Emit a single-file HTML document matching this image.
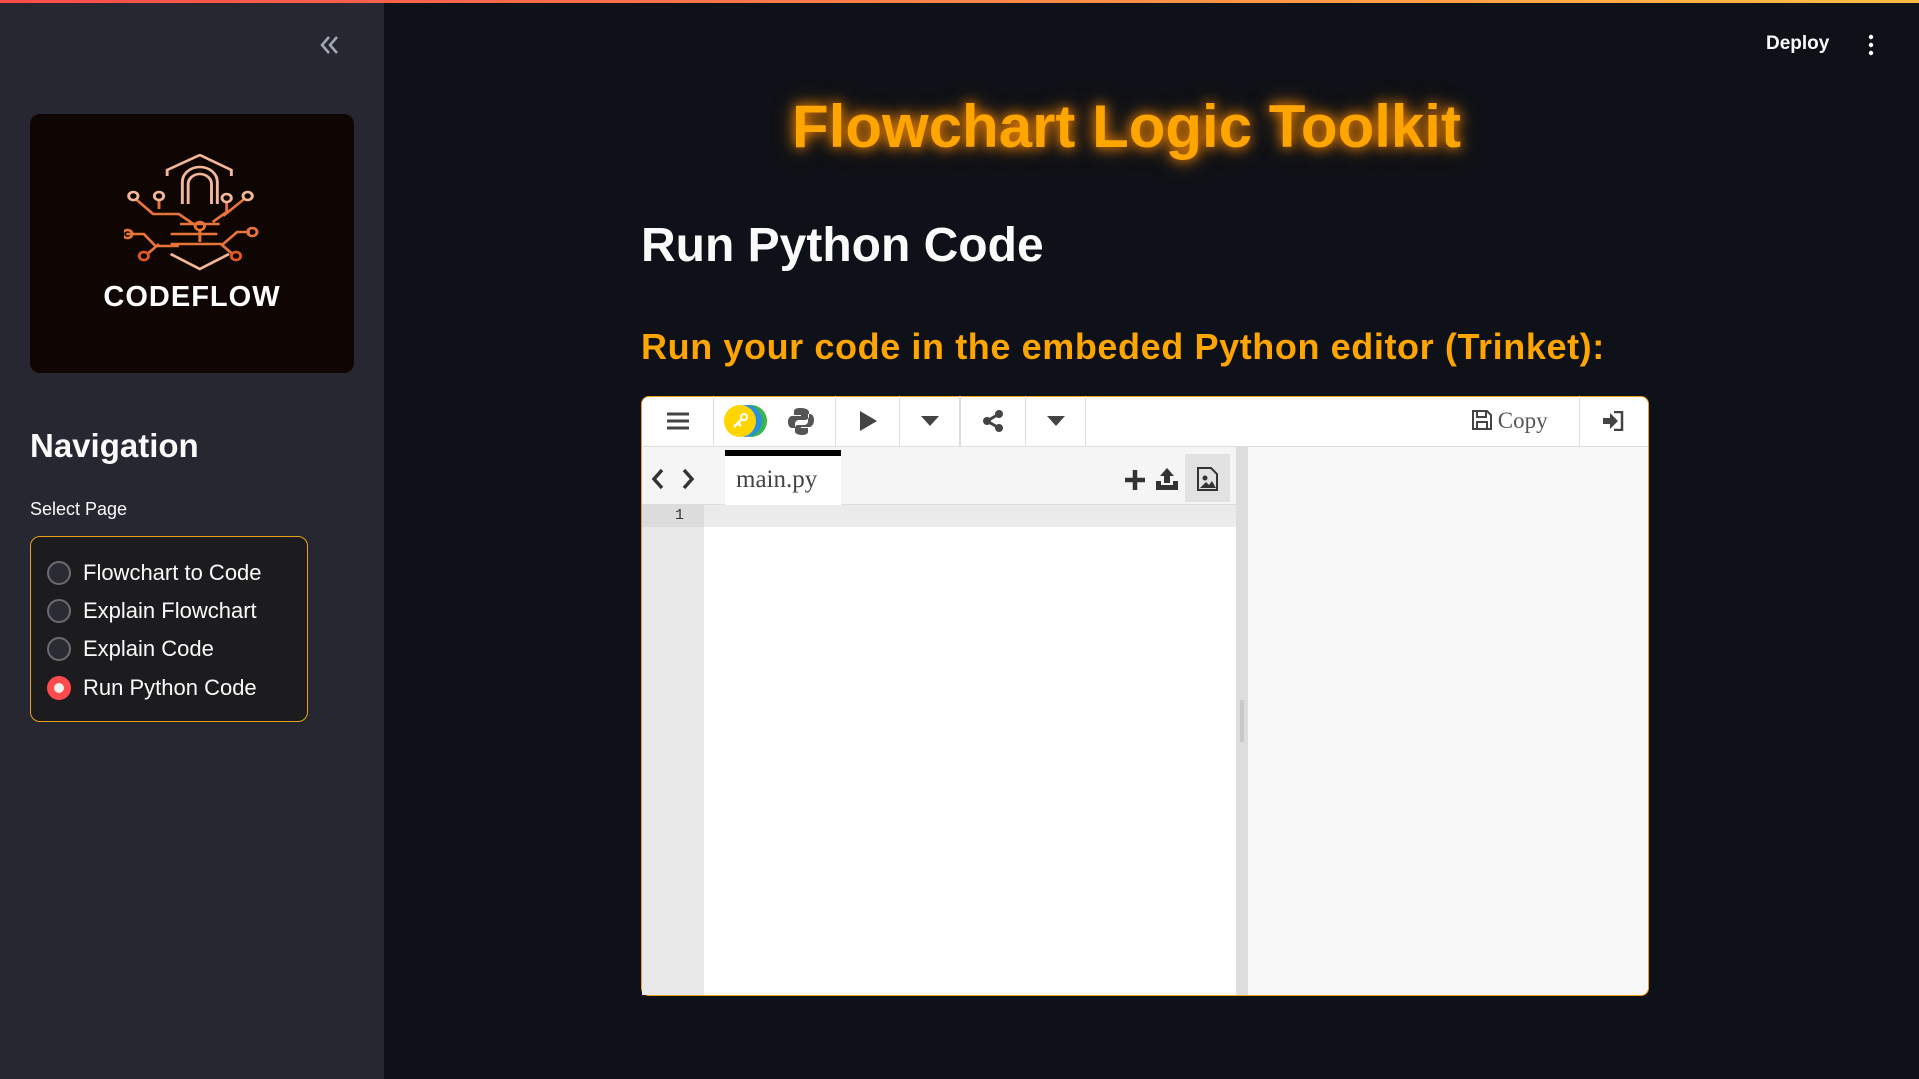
<!DOCTYPE html>
<html><head><meta charset="utf-8"><style>
*{box-sizing:border-box;margin:0;padding:0}
body{width:1919px;height:1079px;overflow:hidden;background:#0e1117;font-family:"Liberation Sans",sans-serif;position:relative;color:#fafafa}
.abs{position:absolute}
#top{left:0;top:0;width:1919px;height:3px;background:linear-gradient(90deg,#ff4b4b,#ffbd45)}
#side{left:0;top:0;width:384px;height:1079px;background:#262730}
.logo{left:30px;top:114px;width:324px;height:259px;background:#0f0603;border-radius:10px}
.radio{left:30px;top:536px;width:278px;height:186px;border:1px solid #e8a019;border-radius:10px;background:#1c1c1f}
.ri{position:absolute;left:16px;font-size:22px;color:#fafafa;height:30px;line-height:30px}
.ri i{position:absolute;left:0;top:3px;width:24px;height:24px;border-radius:50%;border:2px solid #6b6b70;background:#2b2b33}
.ri span{position:absolute;left:36px;white-space:nowrap}
.tb{top:396px;height:50px;border-right:1px solid #ddd;display:flex;align-items:center;justify-content:center}
</style></head><body>
<div id="side" class="abs"></div>
<div id="top" class="abs"></div>
<svg class="abs" style="left:318px;top:34px" width="24" height="22" viewBox="0 0 24 22"><path d="M11 3 4 11l7 8M19 3l-7 8 7 8" fill="none" stroke="#a3a8b8" stroke-width="2.5"/></svg>
<div class="abs logo">
<svg class="abs" style="left:94px;top:40px" width="140" height="120" viewBox="0 0 120 120" preserveAspectRatio="none" fill="none" stroke-width="2.5">
<path d="M37 22V16L65 1 92 16V22" stroke="#f3b79a"/>
<path d="M55 50V30a10 10 0 0 1 20 0v20M50 50V28a15 15 0 0 1 30 0v22" stroke="#f3b79a"/>
<path d="M10 45l15 15h22l15 12M30 45v10M88 48v10l-12 10M103 45L85 62M2 80h15l10 12h20M20 100l10-10M108 78H97L85 90h-15M93 100l-10-10M40 80h40M40 90h40M48 70h34" stroke="#e8743a"/>
<circle cx="8" cy="42" r="4" stroke="#f3b79a"/><circle cx="30" cy="42" r="4" stroke="#f3b79a"/><circle cx="88" cy="44" r="4" stroke="#f3b79a"/><circle cx="106" cy="42" r="4" stroke="#f3b79a"/>
<circle cx="3" cy="80" r="4" stroke="#e8743a"/><circle cx="17" cy="102" r="4" stroke="#e05a20"/><circle cx="110" cy="78" r="4" stroke="#e8743a"/><circle cx="96" cy="102" r="4" stroke="#e05a20"/>
<circle cx="65" cy="72" r="4" stroke="#e8743a"/><path d="M65 76v12" stroke="#e8743a"/>
<path d="M40 100l25 15 25-15" stroke="#f3b79a"/></svg>
<div class="abs" style="left:0;width:324px;top:167px;text-align:center;font-size:29px;font-weight:bold;letter-spacing:1px;color:#fff">CODEFLOW</div>
</div>
<div class="abs" style="left:30px;top:427px;font-size:33px;font-weight:bold">Navigation</div>
<div class="abs" style="left:30px;top:499px;font-size:18px">Select Page</div>
<div class="abs radio">
<div class="ri" style="top:21px"><i></i><span>Flowchart to Code</span></div>
<div class="ri" style="top:59px"><i></i><span>Explain Flowchart</span></div>
<div class="ri" style="top:97px"><i></i><span>Explain Code</span></div>
<div class="ri" style="top:136px"><i style="border:7px solid #ff4b4b;background:#f0f0f0"></i><span>Run Python Code</span></div>
</div>
<div class="abs" style="left:1766px;top:33px;font-size:19px;font-weight:bold">Deploy</div>
<svg class="abs" style="left:1866px;top:34px" width="10" height="22"><circle cx="5" cy="3" r="2.2" fill="#fff"/><circle cx="5" cy="11" r="2.2" fill="#fff"/><circle cx="5" cy="19" r="2.2" fill="#fff"/></svg>
<div class="abs" style="left:384px;width:1485px;top:92px;text-align:center;font-size:60px;font-weight:bold;color:#ffa500;text-shadow:0 0 12px #ff8c00,0 0 22px rgba(255,140,0,.6)">Flowchart Logic Toolkit</div>
<div class="abs" style="left:641px;top:218px;font-size:48px;font-weight:bold">Run Python Code</div>
<div class="abs" style="left:641px;top:326px;font-size:36px;font-weight:bold;color:#ffa500;letter-spacing:0.6px">Run your code in the embeded Python editor (Trinket):</div>
<div class="abs" style="left:641px;top:396px;width:1008px;height:600px;border:1px solid #e8a019;border-radius:8px;background:#fff;overflow:hidden">
</div>
<div class="abs" style="left:642px;top:446px;width:1006px;height:1px;background:#ddd"></div>
<div class="abs tb" style="left:642px;width:72px"><svg width="22" height="18"><path d="M0 2h22M0 9h22M0 16h22" stroke="#444" stroke-width="3"/></svg></div>
<div class="abs tb" style="left:714px;width:122px;justify-content:space-around;padding-right:12px"><svg width="46" height="32"><circle cx="28" cy="16" r="16" fill="#3bb54a"/><circle cx="23" cy="16" r="16" fill="#2a8fe0"/><circle cx="17" cy="16" r="16" fill="#ffd500"/><path d="M11 22l8-8M15 18l3 3" stroke="#fff" stroke-width="2.5"/><circle cx="21" cy="12" r="3" stroke="#fff" fill="none" stroke-width="2"/></svg><svg width="26" height="28" viewBox="0 0 26 28"><path d="M12 1c-6 0-6 3-6 3v4h7v1H4S0 9 0 15s4 6 4 6h3v-4s0-4 4-4h6s4 0 4-4V5s0-4-9-4zM20 7h2s4 0 4 6-4 7-4 7h-9v1h7v4s0 3-6 3-7-3-7-3v-4s0-3 3-3h6s4 0 4-4z" fill="#555"/></svg></div>
<div class="abs tb" style="left:836px;width:64px"><svg width="20" height="22"><path d="M2 1l17 10L2 21z" fill="#444"/></svg></div>
<div class="abs tb" style="left:900px;width:61px;border-right:2px solid #ddd"><svg width="18" height="10"><path d="M0 0h18L9 10z" fill="#444"/></svg></div>
<div class="abs tb" style="left:961px;width:65px"><svg width="22" height="22"><circle cx="17" cy="4" r="4" fill="#444"/><circle cx="5" cy="11" r="4" fill="#444"/><circle cx="17" cy="18" r="4" fill="#444"/><path d="M17 4 5 11l12 7" stroke="#444" stroke-width="3" fill="none"/></svg></div>
<div class="abs tb" style="left:1026px;width:60px"><svg width="18" height="10"><path d="M0 0h18L9 10z" fill="#444"/></svg></div>
<div class="abs" style="left:1472px;top:408px;font-family:'Liberation Serif',serif;font-size:23px;color:#555"><svg width="20" height="20" style="vertical-align:-2px"><path d="M1 1h14l4 4v14H1z M5 1v6h9V1M5 19v-7h10v7" fill="none" stroke="#444" stroke-width="2"/></svg> Copy</div>
<div class="abs" style="left:1579px;top:396px;width:1px;height:50px;background:#ddd"></div>
<svg class="abs" style="left:1602px;top:411px" width="22" height="20"><path d="M12 1h8v18h-8" fill="none" stroke="#444" stroke-width="2.5"/><path d="M1 7h7V2l8 8-8 8v-5H1z" fill="#444"/></svg>
<div class="abs" style="left:642px;top:447px;width:594px;height:58px;background:#f5f5f5;border-bottom:1px solid #ddd"></div>
<svg class="abs" style="left:650px;top:468px" width="46" height="22"><path d="M12 2 4 11l8 9M34 2l8 9-8 9" stroke="#333" stroke-width="3.5" fill="none"/></svg>
<div class="abs" style="left:725px;top:450px;width:116px;height:56px;background:#fff;border-top:6px solid #000"></div>
<div class="abs" style="left:736px;top:466px;font-family:'Liberation Serif',serif;font-size:25px;color:#444">main.py</div>
<svg class="abs" style="left:1125px;top:470px" width="20" height="20"><path d="M10 0v20M0 10h20" stroke="#333" stroke-width="4.5"/></svg>
<svg class="abs" style="left:1155px;top:467px" width="24" height="24"><path d="M12 1 5 9h4v7h6V9h4z" fill="#333"/><path d="M1 14v9h22v-9h-5v4H6v-4z" fill="#333"/></svg>
<div class="abs" style="left:1185px;top:454px;width:45px;height:48px;background:#e2e2e2"></div>
<svg class="abs" style="left:1197px;top:467px" width="22" height="24"><path d="M1 1h13l6 6v16H1z" fill="none" stroke="#333" stroke-width="2"/><circle cx="8" cy="11" r="2.5" fill="#333"/><path d="M3 21l6-6 3 3 3-4 4 7z" fill="#333"/></svg>
<div class="abs" style="left:642px;top:505px;width:62px;height:490px;background:#e8e8e8"></div>
<div class="abs" style="left:642px;top:505px;width:594px;height:22px;background:#ebebeb"></div>
<div class="abs" style="left:642px;top:505px;width:62px;height:22px;background:#dcdcdc;font-family:'Liberation Mono',monospace;font-size:15px;color:#333;text-align:right;padding-right:20px;line-height:22px">1</div>
<div class="abs" style="left:1236px;top:447px;width:12px;height:548px;background:#ddd"></div>
<div class="abs" style="left:1240px;top:700px;width:4px;height:42px;background:#c8c8c8"></div>
<div class="abs" style="left:1248px;top:447px;width:400px;height:548px;background:#f8f8f8;border-bottom-right-radius:8px"></div>
</body></html>
